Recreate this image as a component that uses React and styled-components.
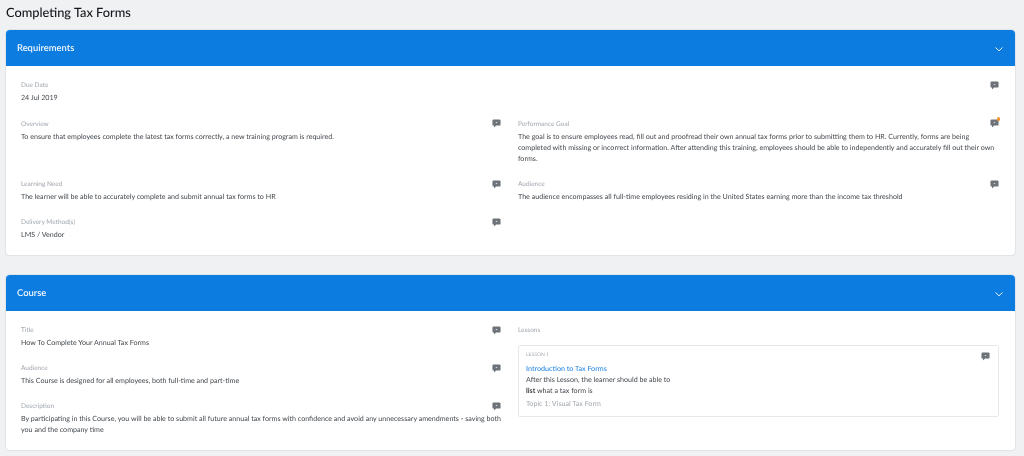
import React from "react";
import styled, { createGlobalStyle } from "styled-components";

const Global = createGlobalStyle`
  html, body { margin: 0; padding: 0; background: #eff1f3; }
  body { font-family: Lato, "Open Sans", sans-serif; color: #4a4f55; text-rendering: geometricPrecision; }
`;

const Page = styled.div`
  width: 1024px;
  height: 456px;
  overflow: hidden;
  box-sizing: border-box;
  padding: 0 9px 0 6px;
  will-change: opacity;
`;

const Title = styled.h1`
  margin: 0;
  height: 30px;
  padding-top: 1px;
  box-sizing: border-box;
  font-size: 12.8px;
  line-height: 22px;
  font-weight: 500;
  color: #14171b;
`;

const Card = styled.section`
  background: #fff;
  border-radius: 4px;
  overflow: hidden;
  box-shadow: 0 0 0 1px #e1e4e8, 0 1px 1px #d9dce0;
  margin-bottom: 20px;
`;

const Header = styled.header`
  height: 36px;
  box-sizing: border-box;
  padding: 1px 11px 0;
  background: #0d7ce0;
  display: flex;
  align-items: center;
  justify-content: space-between;
  color: #f0f7fe;
  font-size: 9.4px;
  font-weight: 600;
`;

const Body = styled.div`
  display: grid;
  grid-template-columns: 480px 481px;
  column-gap: 17px;
  padding: 14px 15px 15px;
`;

const Column = styled.div`
  display: flex;
  flex-direction: column;
`;

const Field = styled.div`
  position: relative;
  min-height: 23px;
  padding-bottom: ${(p) => p.$gap ?? 15}px;
`;

const Label = styled.div`
  font-size: 6.5px;
  line-height: 12px;
  height: 12px;
  color: #a0a6ad;
`;

const Value = styled.div`
  font-size: 7.12px;
  line-height: 11px;
  margin-right: -2px;
  color: #44494e;
`;

const IconSlot = styled.span`
  position: absolute;
  right: ${(p) => p.$right ?? 0}px;
  top: ${(p) => p.$top ?? 1}px;
  display: block;
  width: 9px;
  height: 9px;
`;

const BubbleSvg = styled.svg`
  display: block;
`;

const Dot = styled.span`
  position: absolute;
  right: -1px;
  top: -2px;
  width: 3.5px;
  height: 3.5px;
  border-radius: 50%;
  background: #f5962f;
`;

const LessonCard = styled.div`
  position: relative;
  margin-top: 8px;
  height: 72px;
  box-sizing: border-box;
  border: 1px solid #e6e8eb;
  border-radius: 2px;
  padding: 5px 7px;
`;

const LessonTag = styled.div`
  font-size: 5px;
  line-height: 9px;
  height: 12px;
  color: #a9aeb4;
`;

const LessonTitle = styled.div`
  font-size: 7.15px;
  line-height: 11px;
  font-weight: 500;
  color: #2b8ae6;
`;

const LessonTopic = styled.div`
  font-size: 7.15px;
  line-height: 11px;
  margin-top: 2px;
  color: #a3a8ae;
`;

const Strong = styled.strong`
  font-weight: 700;
  color: #35393d;
`;

const Bubble = () => (
  <BubbleSvg width="9" height="9" viewBox="0 0 10 10" aria-hidden="true">
    <path
      d="M1.8 0.5h6.4a1.3 1.3 0 0 1 1.3 1.3v4.2a1.3 1.3 0 0 1-1.3 1.3H4.6L2.2 9.5V7.3h-.4A1.3 1.3 0 0 1 .5 6V1.8A1.3 1.3 0 0 1 1.8 .5z"
      fill="#6d7378"
    />
    <rect x="4.2" y="3.3" width="1.6" height="1.2" fill="#d5d7d9" />
  </BubbleSvg>
);

const Chevron = () => (
  <svg width="10" height="10" viewBox="0 0 10 10" aria-hidden="true">
    <path d="M1.5 3.5L5 6.8l3.5-3.3" fill="none" stroke="#e6f2fc" strokeWidth="1" />
  </svg>
);

const Comment = ({ dot, top, right }) => (
  <IconSlot $top={top} $right={right}>
    <Bubble />
    {dot && <Dot />}
  </IconSlot>
);

const Item = ({ label, children, dot, gap, noIcon, iconTop }) => (
  <Field $gap={gap}>
    <Label>{label}</Label>
    {children && <Value>{children}</Value>}
    {!noIcon && <Comment dot={dot} top={iconTop} />}
  </Field>
);

export default function App() {
  return (
    <Page>
      <Global />
      <Title>Completing Tax Forms</Title>
      <Card>
        <Header>
          Requirements
          <Chevron />
        </Header>
        <Body>
          <Column>
            <Item label="Due Date" gap={16} noIcon>24 Jul 2019</Item>
            <Item label="Overview" gap={37} iconTop={0}>
              To ensure that employees complete the latest tax forms correctly, a new training program is required.
            </Item>
            <Item label="Learning Need">
              The learner will be able to accurately complete and submit annual tax forms to HR
            </Item>
            <Item label="Delivery Method(s)" gap={0}>LMS / Vendor</Item>
          </Column>
          <Column>
            <Item label="" gap={16} />
            <Item label="Performance Goal" dot iconTop={0}>
              The goal is to ensure employees read, fill out and proofread their own annual tax forms prior to
              submitting them to HR. Currently, forms are being completed with missing or incorrect information. After
              attending this training, employees should be able to independently and accurately fill out their own
              forms.
            </Item>
            <Item label="Audience">
              The audience encompasses all full-time employees residing in the United States earning more than the
              income tax threshold
            </Item>
          </Column>
        </Body>
      </Card>
      <Card>
        <Header>
          Course
          <Chevron />
        </Header>
        <Body>
          <Column>
            <Item label="Title">How To Complete Your Annual Tax Forms</Item>
            <Item label="Audience">This Course is designed for all employees, both full-time and part-time</Item>
            <Item label="Description" gap={0}>
              By participating in this Course, you will be able to submit all future annual tax forms with confidence
              and avoid any unnecessary amendments - saving both you and the company time
            </Item>
          </Column>
          <Column>
            <Label>Lessons</Label>
            <LessonCard>
              <LessonTag>LESSON 1</LessonTag>
              <LessonTitle>Introduction to Tax Forms</LessonTitle>
              <Value>After this Lesson, the learner should be able to</Value>
              <Value>
                <Strong>list</Strong> what a tax form is
              </Value>
              <LessonTopic>Topic 1: Visual Tax Form</LessonTopic>
              <Comment top={6} right={8} />
            </LessonCard>
          </Column>
        </Body>
      </Card>
    </Page>
  );
}
